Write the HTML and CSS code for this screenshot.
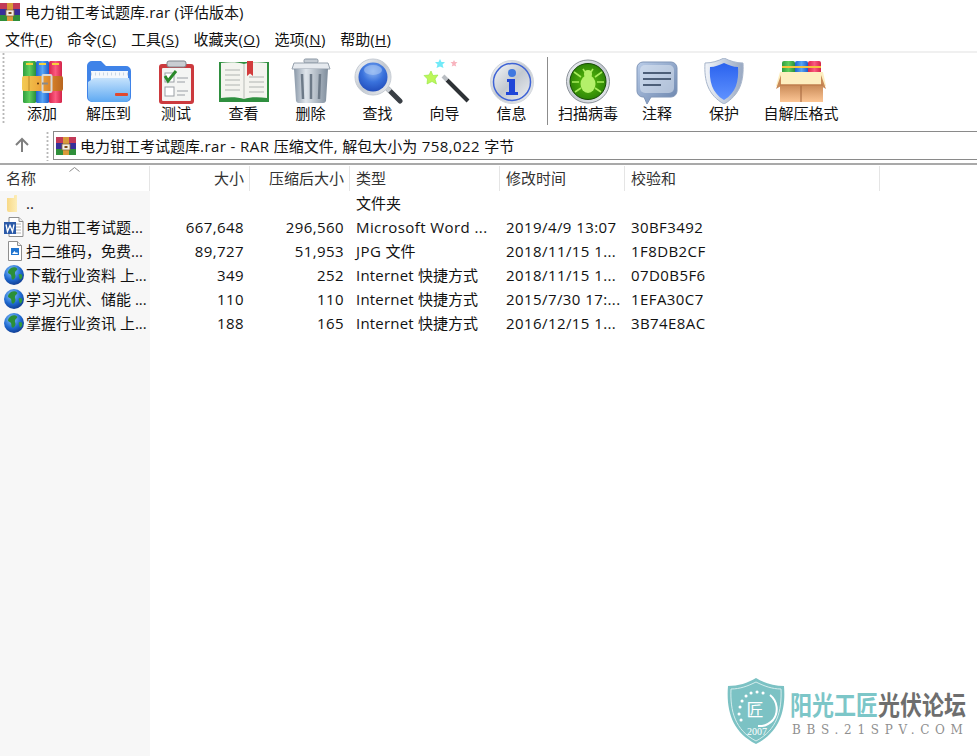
FILE: index.html
```html
<!DOCTYPE html>
<html lang="zh">
<head>
<meta charset="utf-8">
<title>电力钳工考试题库.rar (评估版本)</title>
<link rel="stylesheet" href="styles.css">
</head>
<body>
<svg class="defs" width="0" height="0" aria-hidden="true">
  <defs>
    <linearGradient id="gGreen" x1="0" x2="1" y1="0" y2="0"><stop offset="0" stop-color="#2f9e3f"/><stop offset=".5" stop-color="#5fce5c"/><stop offset="1" stop-color="#2a8f3a"/></linearGradient>
    <linearGradient id="gBlue" x1="0" x2="1" y1="0" y2="0"><stop offset="0" stop-color="#1f62d0"/><stop offset=".5" stop-color="#58a5f5"/><stop offset="1" stop-color="#1c5cc8"/></linearGradient>
    <linearGradient id="gRed" x1="0" x2="1" y1="0" y2="0"><stop offset="0" stop-color="#d8244a"/><stop offset=".5" stop-color="#fb5a80"/><stop offset="1" stop-color="#d32348"/></linearGradient>
    <linearGradient id="gBelt" x1="0" x2="1" y1="0" y2="0"><stop offset="0" stop-color="#f3cb55"/><stop offset=".4" stop-color="#eeaa3c"/><stop offset=".7" stop-color="#d9822b"/><stop offset="1" stop-color="#b8661f"/></linearGradient>
    <linearGradient id="gFolder" x1="0" x2="0" y1="0" y2="1"><stop offset="0" stop-color="#c5e2fc"/><stop offset="1" stop-color="#5ea9f2"/></linearGradient>
    <linearGradient id="gSilver" x1="0" x2="1" y1="0" y2="1"><stop offset="0" stop-color="#f6f8fa"/><stop offset=".5" stop-color="#c2c8d0"/><stop offset="1" stop-color="#eef0f3"/></linearGradient>
    <linearGradient id="gTrash" x1="0" x2="1" y1="0" y2="0"><stop offset="0" stop-color="#8a98a8"/><stop offset=".35" stop-color="#e0e6ec"/><stop offset="1" stop-color="#7f8d9c"/></linearGradient>
    <radialGradient id="gLens" cx=".5" cy=".3" r=".75"><stop offset="0" stop-color="#8fb8f4"/><stop offset=".5" stop-color="#3a72dc"/><stop offset="1" stop-color="#1f49b8"/></radialGradient>
    <radialGradient id="gBug" cx=".5" cy=".5" r=".55"><stop offset="0" stop-color="#5cc00e"/><stop offset="1" stop-color="#2a8005"/></radialGradient>
    <linearGradient id="gNote" x1="0" x2="1" y1="0" y2="1"><stop offset="0" stop-color="#b9cce8"/><stop offset="1" stop-color="#6a84ac"/></linearGradient>
    <linearGradient id="gShieldOut" x1="0" x2="1" y1="0" y2="0"><stop offset="0" stop-color="#f2f5fa"/><stop offset=".5" stop-color="#c5cfdf"/><stop offset="1" stop-color="#98a8c2"/></linearGradient>
    <linearGradient id="gShieldIn" x1="0" x2="0" y1="0" y2="1"><stop offset="0" stop-color="#2a62ee"/><stop offset="1" stop-color="#5f92ff"/></linearGradient>
    <linearGradient id="gBox" x1="0" x2="0" y1="0" y2="1"><stop offset="0" stop-color="#c98a58"/><stop offset="1" stop-color="#fcc695"/></linearGradient>
    <radialGradient id="gGlobe" cx=".4" cy=".3" r=".8"><stop offset="0" stop-color="#8cc8ff"/><stop offset=".55" stop-color="#1f6ad0"/><stop offset="1" stop-color="#0c2f80"/></radialGradient>
    <linearGradient id="gYellow" x1="0" x2="1" y1="0" y2="0"><stop offset="0" stop-color="#f8d987"/><stop offset="1" stop-color="#fdeeb8"/></linearGradient>

    <symbol id="rarSmall" viewBox="0 0 20 18">
      <rect width="20" height="6" fill="#c23a58"/>
      <rect y="6" width="20" height="6" fill="#37309a"/>
      <rect y="12" width="20" height="6" fill="#2f8f3a"/>
      <rect x="7" width="6" height="18" fill="#d99a3a"/>
      <rect x="6" y="7" width="8" height="6" fill="#f3efe4" stroke="#8a6a3a" stroke-width=".8"/>
      <rect x="8.5" y="9" width="3" height="2" fill="#7a4a1a"/>
    </symbol>

    <symbol id="globe" viewBox="0 0 20 20">
      <circle cx="10" cy="10" r="10" fill="url(#gGlobe)"/>
      <path d="M7 3c2-1 5-.8 6 .5 1 1.500-1.500 2-2 4-.5 2 1 2.500.3 4.500-.8 2-1.800 3-3 2.500-1.300-.8-.5-3-1.300-4.500-.8-1.300-3-1-3-2.500S5.500 4 7 3z" fill="#2b8f38"/>
      <path d="M15.500 9c1.500-.3 2.800.5 2.800 2s-.8 3-2 3.500c-.8 0-.8-1.500-1.200-2.700S14.300 9.300 15.500 9z" fill="#329a3a"/>
    </symbol>
  </defs>
</svg>

<header class="title">
  <svg class="title-icon"><use href="#rarSmall"/></svg>
  <span>电力钳工考试题库<span class="in">.rar (</span>评估版本<span class="in">)</span></span>
</header>

<nav class="menu">
  <span class="menu-item">文件<span class="en">(<u>F</u>)</span></span>
  <span class="menu-item">命令<span class="en">(<u>C</u>)</span></span>
  <span class="menu-item">工具<span class="en">(<u>S</u>)</span></span>
  <span class="menu-item">收藏夹<span class="en">(<u>O</u>)</span></span>
  <span class="menu-item">选项<span class="en">(<u>N</u>)</span></span>
  <span class="menu-item">帮助<span class="en">(<u>H</u>)</span></span>
</nav>

<section class="toolbar">
  <div class="tool w66">
    <svg class="tool-icon" viewBox="0 0 52 46">
      <rect x="7" y="3" width="13" height="42" rx="1.500" fill="url(#gGreen)"/>
      <rect x="20" y="3" width="13" height="42" rx="1.500" fill="url(#gBlue)"/>
      <rect x="33" y="3" width="13" height="42" rx="1.500" fill="url(#gRed)"/>
      <rect x="10" y="5" width="7" height="2" fill="#f5d23c"/><rect x="23" y="5" width="7" height="2" fill="#f5d23c"/><rect x="36" y="5" width="7" height="2" fill="#f5d23c"/>
      <rect x="6" y="18" width="41" height="15" rx="2" fill="url(#gBelt)"/>
      <path d="M13 18v15" stroke="#b98a2a" stroke-width="1"/>
      <rect x="26.500" y="17" width="9" height="17" rx="1" fill="none" stroke="#d8d8d8" stroke-width="2"/>
      <circle cx="22" cy="25.500" r="1" fill="#5a3410"/>
      <path d="M26 25.500h6" stroke="#8a8a8a" stroke-width="2"/>
    </svg>
    <span>添加</span>
  </div>
  <div class="tool w67">
    <svg class="tool-icon" viewBox="0 0 52 46">
      <path d="M4 8a5 5 0 0 1 5-5h9l5 5h20a5 5 0 0 1 5 5v26a5 5 0 0 1-5 5H9a5 5 0 0 1-5-5z" fill="#3f83e8"/>
      <rect x="8" y="13" width="37" height="14" fill="#f4f8fc"/>
      <path d="M8 16h37" stroke="#c9d6e4" stroke-dasharray="1 3" stroke-width="3"/>
      <path d="M5 24l6-4h35l1 4v15a5 5 0 0 1-5 5H10a5 5 0 0 1-5-5z" fill="url(#gFolder)"/>
      <rect x="32" y="35" width="13" height="3" rx="1" fill="#e2492f"/>
    </svg>
    <span>解压到</span>
  </div>
  <div class="tool w68">
    <svg class="tool-icon" viewBox="0 0 52 46">
      <rect x="9" y="6" width="35" height="40" rx="3" fill="#cc3a3e"/>
      <rect x="12" y="10" width="29" height="33" rx="1" fill="#f4f5f3"/>
      <rect x="17" y="3" width="19" height="6" rx="2" fill="#c9cdd2" stroke="#7e858c"/>
      <rect x="15" y="15" width="9" height="9" fill="#fff" stroke="#9aa0a5"/>
      <path d="M15 18l3 5 8-10" fill="none" stroke="#2a8a2a" stroke-width="3"/>
      <rect x="15" y="29" width="9" height="9" fill="#fff" stroke="#9aa0a5"/>
      <path d="M27 20h11M27 24h8M27 33h11M27 37h8" stroke="#9aa0a5" stroke-width="1.200"/>
    </svg>
    <span>测试</span>
  </div>
  <div class="tool w67">
    <svg class="tool-icon" viewBox="0 0 52 46">
      <path d="M1 4h50v40H1z" fill="#2f8f3f"/>
      <path d="M3 5c8-1 17-1 23 1 6-2 15-2 23-1v35c-8-1-17-1-23 1-6-2-15-2-23-1z" fill="#f4f4ef"/>
      <path d="M26 6v35" stroke="#b9bcb8"/>
      <path d="M7 12h15M7 17h15M7 22h15M7 27h15M7 32h15M31 19h15M31 24h15M31 29h15M31 34h15" stroke="#c6c9c6" stroke-width="1.500"/>
      <path d="M29 3h6v15l-3-2.500L29 18z" fill="#d23c3c"/>
    </svg>
    <span>查看</span>
  </div>
  <div class="tool w67">
    <svg class="tool-icon" viewBox="0 0 52 46">
      <rect x="19" y="1" width="14" height="4" rx="1.500" fill="#c5ccd4" stroke="#8a96a3"/>
      <path d="M7 11l2-6h34l2 6z" fill="#e6eaef" stroke="#96a1ad"/>
      <path d="M9 11h34l-2 32a3 3 0 0 1-3 2H14a3 3 0 0 1-3-2z" fill="url(#gTrash)"/>
      <path d="M17 16l1 25M26 16v25M35 16l-1 25" stroke="#6d7a88" stroke-width="2.500"/>
    </svg>
    <span>删除</span>
  </div>
  <div class="tool w67">
    <svg class="tool-icon" viewBox="0 0 52 46">
      <path d="M36 31l12 12" stroke="#3a3f45" stroke-width="5" stroke-linecap="round"/>
      <path d="M33 28l5 5" stroke="#c9ced4" stroke-width="5"/>
      <circle cx="21" cy="19" r="18" fill="url(#gSilver)" stroke="#c5cbd3"/>
      <circle cx="21" cy="19" r="14.500" fill="url(#gLens)"/>
      <ellipse cx="21" cy="12" rx="9" ry="5" fill="#a9c6f4" opacity=".6"/>
    </svg>
    <span>查找</span>
  </div>
  <div class="tool w67">
    <svg class="tool-icon" viewBox="0 0 52 46">
      <path d="M28 22l21 21" stroke="#2e3236" stroke-width="4"/>
      <path d="M24 18l4 4" stroke="#b9bdc2" stroke-width="4"/>
      <path d="M12 13l2 4.500 5-.5-3 4 1.500 5-4.500-2.500-5 2.500.5-5L5 17.500l5-.5z" fill="#bdf65a" stroke="#8fe83c" stroke-width=".6"/>
      <path d="M21 1l1.500 3h3.500l-2.500 2.500 1 3.500-3.500-1.500-3.500 1.500 1-3.500L16 4h3.500z" fill="#72eaf8"/>
      <path d="M35 2l1 2h2.500l-2 2 .8 2.500L35 7.500l-2.300 1 .8-2.500-2-2H34z" fill="#f8b4be"/>
    </svg>
    <span>向导</span>
  </div>
  <div class="tool w67">
    <svg class="tool-icon" viewBox="0 0 52 46">
      <circle cx="26" cy="24" r="21.500" fill="url(#gSilver)" stroke="#d3d7dd"/>
      <circle cx="26" cy="24" r="18.500" fill="url(#gSilver)" stroke="#3d62d6" stroke-width="1.500"/>
      <circle cx="26" cy="15" r="4" fill="#3f78e0"/>
      <path d="M21 21h8v13h3v3H20v-3h3V24h-2z" fill="#1f46d8"/>
    </svg>
    <span>信息</span>
  </div>
  <div class="divider"></div>
  <div class="tool w78">
    <svg class="tool-icon" viewBox="0 0 52 46">
      <circle cx="26" cy="23.500" r="21.500" fill="url(#gSilver)" stroke="#8a9098"/>
      <circle cx="26" cy="23.500" r="18" fill="url(#gBug)" stroke="#174a05"/>
      <path d="M12 14l7 5M40 14l-7 5M10 24h7M42 24h-7M13 34l6-4M39 34l-6-4M21 11l2 3M31 11l-2 3" stroke="#a8ec5c" stroke-width="1.600" fill="none"/>
      <circle cx="26" cy="16" r="4" fill="#b4f06a"/>
      <ellipse cx="26" cy="26" rx="7.500" ry="9" fill="#b4f06a"/>
    </svg>
    <span>扫描病毒</span>
  </div>
  <div class="tool w60">
    <svg class="tool-icon" viewBox="0 0 52 46">
      <path d="M12 4h28a6 6 0 0 1 6 6v23a6 6 0 0 1-6 6H20l-4 7-3-7h-1a6 6 0 0 1-6-6V10a6 6 0 0 1 6-6z" fill="url(#gNote)" stroke="#8096b8"/>
      <rect x="9" y="7" width="34" height="28" rx="5" fill="#dfe7f2" opacity=".55"/>
      <path d="M12 15h28M12 21h28M12 27h18" stroke="#4d5f78" stroke-width="2"/>
    </svg>
    <span>注释</span>
  </div>
  <div class="tool w74">
    <svg class="tool-icon" viewBox="0 0 52 46">
      <path d="M26 0c6 3 12 5 19 5 1 18-3 32-19 41C10 37 6 23 7 5c7 0 13-2 19-5z" fill="url(#gShieldOut)" stroke="#a7b5cb"/>
      <path d="M26 5c5 2 9 4 14 4 1 14-2 26-14 33C14 35 11 23 12 9c5 0 9-2 14-4z" fill="url(#gShieldIn)"/>
    </svg>
    <span>保护</span>
  </div>
  <div class="tool w80">
    <svg class="tool-icon" viewBox="0 0 52 46">
      <rect x="7" y="3" width="13" height="22" rx="2" fill="url(#gGreen)"/>
      <rect x="20" y="3" width="13" height="22" rx="2" fill="url(#gBlue)"/>
      <rect x="33" y="3" width="13" height="22" rx="2" fill="url(#gRed)"/>
      <path d="M7 9h13M20 9h13M33 9h13" stroke="#f5c33c" stroke-width="2"/>
      <path d="M5 14h43l3 14H1z" fill="#fdeec0"/>
      <path d="M1 31l5-14v11zM51 31l-5-14v11z" fill="#c98a58"/>
      <rect x="5" y="27" width="43" height="17" fill="url(#gBox)"/>
      <path d="M26 27v17" stroke="#a0623a"/>
      <path d="M5 27h43" stroke="#bf7e4e" stroke-width="1.500"/>
    </svg>
    <span>自解压格式</span>
  </div>
</section>

<section class="addr">
  <svg class="up" viewBox="0 0 16 16"><path d="M8 15V2M2 8l6-6 6 6" fill="none" stroke="#7f7f7f" stroke-width="2"/></svg>
  <div class="addr-grip"></div>
  <div class="addr-box">
    <svg class="addr-icon"><use href="#rarSmall"/></svg>
    <span>电力钳工考试题库<span class="en">.rar - RAR </span>压缩文件<span class="en">, </span>解包大小为<span class="en"> 758,022 </span>字节</span>
  </div>
</section>

<main class="list">
  <div class="head">
    <div class="hc c-name">名称<svg class="sort" viewBox="0 0 11 5"><path d="M.5 4.500l5-4 5 4" fill="none" stroke="#8a8a8a"/></svg></div>
    <div class="hc c-size right">大小</div>
    <div class="hc c-pack right">压缩后大小</div>
    <div class="hc c-type">类型</div>
    <div class="hc c-time">修改时间</div>
    <div class="hc c-crc">校验和</div>
  </div>

  <div class="row">
    <div class="c-name name">
      <svg class="ficon" viewBox="0 0 20 20"><path d="M3 5h7V3a1 1 0 0 1 1-1h2v17H5a2 2 0 0 1-2-2z" fill="url(#gYellow)"/></svg>
      <span>..</span>
    </div>
    <div class="c-size right"></div><div class="c-pack right"></div>
    <div class="c-type">文件夹</div><div class="c-time"></div><div class="c-crc"></div>
  </div>

  <div class="row">
    <div class="c-name name">
      <svg class="ficon" viewBox="0 0 20 20"><path d="M5 .5h10l4 4v15H5z" fill="#fff" stroke="#8f8f8f"/><path d="M15 .5v4h4" fill="#eee" stroke="#8f8f8f"/><path d="M12 7h5M12 10h5M12 13h5M12 16h5" stroke="#b4b4b4"/><rect y="5" width="12" height="12" fill="#2b5aa8"/><path d="M2 7.500l1.500 7 2.500-6 2.500 6 1.500-7" fill="none" stroke="#fff" stroke-width="1.300"/></svg>
      <span>电力钳工考试题...</span>
    </div>
    <div class="c-size right en">667,648</div><div class="c-pack right en">296,560</div>
    <div class="c-type en">Microsoft Word ...</div><div class="c-time en">2019/4/9 13:07</div><div class="c-crc en">30BF3492</div>
  </div>

  <div class="row">
    <div class="c-name name">
      <svg class="ficon" viewBox="0 0 20 20"><path d="M4.500.5h9l4 4v15h-13z" fill="#fff" stroke="#8f8f8f"/><path d="M13.500.5v4h4" fill="#eee" stroke="#8f8f8f"/><rect x="7" y="7" width="8" height="7" fill="#1f74d0"/><path d="M8 13l2.500-3 1.500 2 1-1 1 2z" fill="#fff"/></svg>
      <span>扫二维码，免费...</span>
    </div>
    <div class="c-size right en">89,727</div><div class="c-pack right en">51,953</div>
    <div class="c-type"><span class="en">JPG </span>文件</div><div class="c-time en">2018/11/15 1...</div><div class="c-crc en">1F8DB2CF</div>
  </div>

  <div class="row">
    <div class="c-name name"><svg class="ficon"><use href="#globe"/></svg><span>下载行业资料 上...</span></div>
    <div class="c-size right en">349</div><div class="c-pack right en">252</div>
    <div class="c-type"><span class="in">Internet </span>快捷方式</div><div class="c-time en">2018/11/15 1...</div><div class="c-crc en">07D0B5F6</div>
  </div>

  <div class="row">
    <div class="c-name name"><svg class="ficon"><use href="#globe"/></svg><span>学习光伏、储能 ...</span></div>
    <div class="c-size right en">110</div><div class="c-pack right en">110</div>
    <div class="c-type"><span class="in">Internet </span>快捷方式</div><div class="c-time en">2015/7/30 17:...</div><div class="c-crc en">1EFA30C7</div>
  </div>

  <div class="row">
    <div class="c-name name"><svg class="ficon"><use href="#globe"/></svg><span>掌握行业资讯 上...</span></div>
    <div class="c-size right en">188</div><div class="c-pack right en">165</div>
    <div class="c-type"><span class="in">Internet </span>快捷方式</div><div class="c-time en">2016/12/15 1...</div><div class="c-crc en">3B74E8AC</div>
  </div>
</main>

<aside class="mark">
  <svg class="mark-shield" viewBox="0 0 60 68">
    <path d="M30 1c8 5 18 8 28 8 2 24-4 46-28 58C6 55 0 33 2 9c10 0 20-3 28-8z" fill="#7cc2c4"/>
    <path d="M30 5c8 4 16 7 25 7 1 22-4 41-25 52C9 53 4 34 5 12c9 0 17-3 25-7z" fill="none" stroke="#d5eded" stroke-width="1"/>
    <path d="M44 18a18 18 0 0 1 3 25 18 18 0 0 1-15 6" fill="none" stroke="#fff" stroke-width="2"/>
    <path d="M16 24l.1 0M20 19l.1 0M25 16l.1 0M31 15l.1 0M37 16l.1 0M14 30l.1 0M13 37l.1 0M15 43l.1 0" stroke="#fff" stroke-width="3" stroke-linecap="round"/>
    <text x="29" y="39" class="mark-glyph">匠</text>
    <text x="31" y="58" class="mark-year">2007</text>
  </svg>
  <div class="mark-text">
    <div class="mark-title"><span class="teal">阳光工匠</span><span class="grey">光伏论坛</span></div>
    <div class="mark-url">BBS.21SPV.COM</div>
  </div>
</aside>
</body>
</html>
```

FILE: styles.css
```css
* { box-sizing: border-box; }

html, body {
  margin: 0;
  padding: 0;
}

body {
  position: relative;
  width: 977px;
  height: 756px;
  overflow: hidden;
  background: #fff;
  color: #111;
  font: 15px/20px "Open Sans", "Noto Sans CJK SC", sans-serif;
}

.defs { position: absolute; }

.en { letter-spacing: .42px; }
.in { letter-spacing: .2px; }

.title {
  display: flex;
  align-items: center;
  height: 27px;
  padding-bottom: 3px;
  gap: 5px;
}

.title-icon {
  width: 20px;
  height: 18px;
}

.menu {
  display: flex;
  height: 24px;
  padding: 2px 0 0 5px;
  gap: 14.2px;
}

.menu-item { white-space: nowrap; }

.toolbar {
  display: flex;
  height: 74px;
  padding: 5px 0 0 9px;
  border-top: 2px solid #f0f0f0;
  background: radial-gradient(circle, #b8b8b8 1px, transparent 1.200px) 2px 3px / 3px 4px repeat-y;
}

.tool {
  display: flex;
  flex-direction: column;
  align-items: center;
  flex: none;
  white-space: nowrap;
}

.tool-icon {
  width: 52px;
  height: 46px;
  flex: none;
}

.tool span {
  margin-top: -1px;
  line-height: 20px;
}

.w60 { width: 60px; }
.w66 { width: 66px; }
.w67 { width: 67px; }
.w68 { width: 68px; }
.w74 { width: 74px; }
.w78 { width: 78px; }
.w80 { width: 80px; }

.divider {
  flex: none;
  width: 1px;
  height: 68px;
  margin: -1px 1px 0 2px;
  background: #8c8c8c;
}

.addr {
  display: flex;
  align-items: flex-start;
  height: 40px;
  border-bottom: 2px solid #a9a9a9;
}

.up {
  flex: none;
  width: 16px;
  height: 16px;
  margin: 12px 0 0 14px;
}

.addr-grip {
  flex: none;
  width: 3px;
  height: 30px;
  margin: 6px 0 0 16px;
  background: radial-gradient(circle, #b8b8b8 1px, transparent 1.200px) 0 0 / 3px 4px repeat-y;
}

.addr-box {
  display: flex;
  align-items: center;
  gap: 4px;
  flex: 1;
  height: 29px;
  margin: 6px 0 0 4px;
  padding-left: 2px;
  border: 1px solid #8a8a8a;
  border-right: 0;
  white-space: nowrap;
}

.addr-icon {
  width: 20px;
  height: 18px;
}

.list {
  height: 591px;
  background: linear-gradient(#f7f7f7, #f7f7f7) 0 26px / 150px 100% no-repeat;
}

.head {
  display: flex;
  height: 26px;
  padding-top: 1px;
  width: 880px;
}

.hc {
  position: relative;
  height: 25px;
  line-height: 25px;
  color: #333;
  border-right: 1px solid #e5e5e5;
}

.row {
  display: flex;
  height: 24px;
  line-height: 24px;
  white-space: nowrap;
}

.c-name { flex: none; width: 150px; padding-left: 6px; }
.c-size { flex: none; width: 100px; padding-left: 6px; padding-right: 6px; }
.c-pack { flex: none; width: 100px; padding-left: 6px; padding-right: 6px; }
.c-type { flex: none; width: 150px; padding-left: 6px; }
.c-time { flex: none; width: 125px; padding-left: 6px; }
.c-crc  { flex: none; width: 255px; padding-left: 6px; }

.right { text-align: right; }
.hc.right { padding-right: 5px; }

.name {
  display: flex;
  align-items: center;
  gap: 2px;
  padding-left: 4px;
}

.ficon {
  flex: none;
  width: 20px;
  height: 20px;
}

.sort {
  position: absolute;
  left: 69px;
  top: 1px;
  width: 11px;
  height: 5px;
}

.mark {
  position: absolute;
  left: 726px;
  top: 677px;
  display: flex;
  gap: 4px;
}

.mark-shield {
  flex: none;
  width: 60px;
  height: 68px;
}

.mark-glyph {
  fill: #fff;
  font: 17px "Noto Sans CJK SC", sans-serif;
  text-anchor: middle;
}

.mark-year {
  fill: #fff;
  font: 10px "Liberation Serif", serif;
  text-anchor: middle;
}

.mark-text {
  width: 187px;
  padding-top: 11px;
}

.mark-title {
  display: flex;
  width: 208px;
  font: 700 26px/32px "Noto Sans CJK SC", sans-serif;
  white-space: nowrap;
  transform: scaleX(.846);
  transform-origin: left center;
}

.teal { color: #7cc6c8; }
.grey { color: #6e6e6e; }

.mark-url {
  margin-top: 4px;
  padding-left: 2px;
  font: 12px/12px "DejaVu Serif", serif;
  letter-spacing: 5.700px;
  color: #8f8f8f;
  white-space: nowrap;
}
```
